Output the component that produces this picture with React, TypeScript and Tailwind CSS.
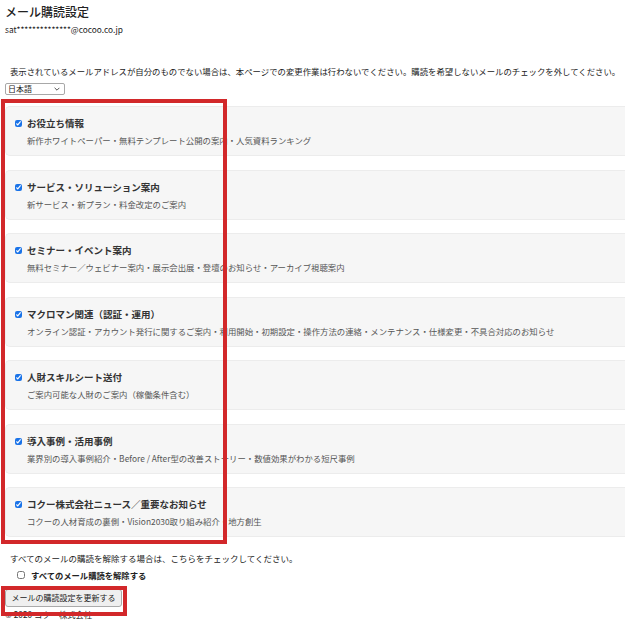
import { useState } from 'react';

const topics = [
  { title: 'お役立ち情報', detail: '新作ホワイトペーパー・無料テンプレート公開の案内・人気資料ランキング' },
  { title: 'サービス・ソリューション案内', detail: '新サービス・新プラン・料金改定のご案内' },
  { title: 'セミナー・イベント案内', detail: '無料セミナー／ウェビナー案内・展示会出展・登壇のお知らせ・アーカイブ視聴案内' },
  { title: 'マクロマン関連（認証・運用）', detail: 'オンライン認証・アカウント発行に関するご案内・利用開始・初期設定・操作方法の連絡・メンテナンス・仕様変更・不具合対応のお知らせ' },
  { title: '人財スキルシート送付', detail: 'ご案内可能な人財のご案内（稼働条件含む）' },
  { title: '導入事例・活用事例', detail: '業界別の導入事例紹介・Before / After型の改善ストーリー・数値効果がわかる短尺事例' },
  { title: 'コクー株式会社ニュース／重要なお知らせ', detail: 'コクーの人材育成の裏側・Vision2030取り組み紹介・地方創生' },
];

export default function App() {
  const [checked, setChecked] = useState<boolean[]>(topics.map(() => true));
  const [unsubAll, setUnsubAll] = useState(false);

  return (
    <div
      className="relative h-[629px] overflow-hidden bg-white pl-[5px] text-[#222]"
      style={{ fontFamily: '"Noto Sans CJK JP", "Noto Sans", sans-serif' }}
    >
      <h1 className="pt-[4px] text-[12px] leading-[16px] font-medium">メール購読設定</h1>
      <p className="mt-[4px] text-[8.3px] leading-[11px]">sat**************@cocoo.co.jp</p>

      <p className="mt-[29px] pl-[5px] text-[8.4px] leading-[14px] whitespace-nowrap">
        表示されているメールアドレスが自分のものでない場合は、本ページでの変更作業は行わないでください。購読を希望しないメールのチェックを外してください。
      </p>
      <div className="relative mt-[5px] w-[60px]">
        <select className="block h-[12px] w-full appearance-none rounded-[2px] border border-[#a8a8a8] bg-white pl-[2px] text-[8px] leading-[10px]">
          <option>日本語</option>
          <option>English</option>
        </select>
        <svg viewBox="0 0 10 6" className="pointer-events-none absolute top-[4px] right-[5px] h-[4px] w-[6px]" fill="none" stroke="#333" strokeWidth="1.4">
          <path d="M1 1l4 4 4-4" />
        </svg>
      </div>

      {/* topics */}
      <div className="mt-[11px] flex flex-col gap-[13.5px]">
        {topics.map((t, i) => (
          <div key={t.title} className="h-[50px] rounded-l-[5px] border border-r-0 border-[#ececec] bg-[#f6f6f6] pl-[9px] pt-[9px]">
            <label className="flex items-center gap-[5px]">
              <input
                type="checkbox"
                checked={checked[i]}
                onChange={() => setChecked((c) => c.map((v, j) => (j === i ? !v : v)))}
                className="m-0 h-[7px] w-[7px] accent-[#1a73e8]"
              />
              <span className="text-[9.5px] leading-[15px] font-bold text-[#333]">{t.title}</span>
            </label>
            <p className="mt-[3px] pl-[12px] text-[8.4px] leading-[13px] whitespace-nowrap text-[#555]">{t.detail}</p>
          </div>
        ))}
      </div>

      <p className="mt-[14px] pl-[5px] text-[8.5px] leading-[14px]">すべてのメールの購読を解除する場合は、こちらをチェックしてください。</p>
      <label className="mt-[3px] flex items-center gap-[6px] pl-[12px]">
        <input
          type="checkbox"
          checked={unsubAll}
          onChange={() => setUnsubAll(!unsubAll)}
          className="m-0 h-[8px] w-[8px] rounded-none"
        />
        <span className="text-[8.3px] leading-[14px] font-bold">すべてのメール購読を解除する</span>
      </label>
      <button className="mt-[7px] block h-[18px] w-[117px] rounded-[3px] border border-[#aaa] bg-[#efefef] text-[8px] leading-[14px] text-[#222]">
        メールの購読設定を更新する
      </button>
      <p className="mt-[1px] text-[8.3px] leading-[12px]">© 2020 コクー株式会社</p>

      {/* red annotation boxes */}
      <div className="pointer-events-none absolute top-[99px] left-[1px] h-[445px] w-[226px] border-[4px] border-[#d2282a]" />
      <div className="pointer-events-none absolute top-[586px] left-[1px] h-[30px] w-[126px] border-[4px] border-[#d2282a]" />
    </div>
  );
}
